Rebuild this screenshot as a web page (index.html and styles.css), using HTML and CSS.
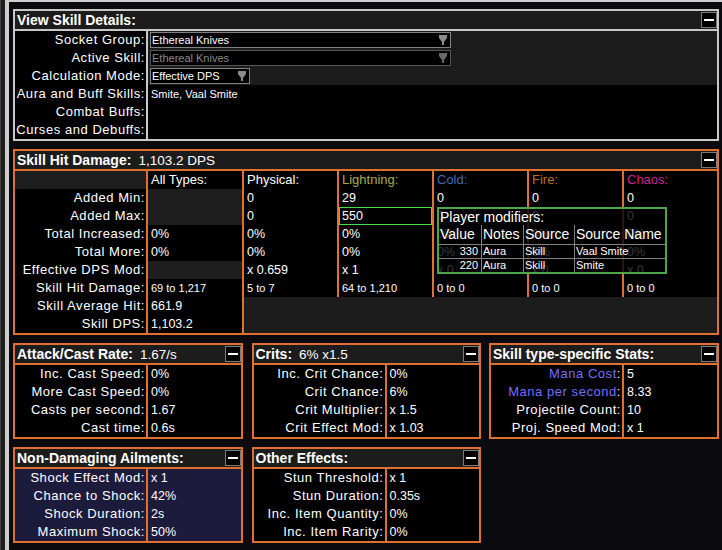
FILE: index.html
```html
<!DOCTYPE html>
<html lang="en">
<head>
  <meta charset="UTF-8">
  <title>Calcs - Skill Details</title>
  <link rel="stylesheet" href="styles.css">
</head>
<body>
  <div class="app">
    <div class="edge"></div>
    <div class="main">

      <!-- View Skill Details -->
      <section class="panel panel-gray">
        <div class="panel-head">
          <span class="title">View Skill Details:</span>
          <button class="collapse" type="button"></button>
        </div>
        <div class="kv">
          <div class="lbl">Socket Group:</div>
          <div class="ctl">
            <div class="select wide">
              <span>Ethereal Knives</span>
              <svg class="arrow" width="8" height="10" viewBox="0 0 8 10"><path d="M0 0H8V3L5 7V10H3V7L0 3Z" fill="#8c8c8c"/></svg>
            </div>
          </div>
          <div class="lbl">Active Skill:</div>
          <div class="ctl">
            <div class="select wide disabled">
              <span>Ethereal Knives</span>
              <svg class="arrow" width="8" height="10" viewBox="0 0 8 10"><path d="M0 0H8V3L5 7V10H3V7L0 3Z" fill="#6a6a6a"/></svg>
            </div>
          </div>
          <div class="lbl">Calculation Mode:</div>
          <div class="ctl">
            <div class="select narrow">
              <span>Effective DPS</span>
              <svg class="arrow" width="8" height="10" viewBox="0 0 8 10"><path d="M0 0H8V3L5 7V10H3V7L0 3Z" fill="#8c8c8c"/></svg>
            </div>
          </div>
          <div class="lbl">Aura and Buff Skills:</div>
          <div class="val small">Smite, Vaal Smite</div>
          <div class="lbl">Combat Buffs:</div>
          <div class="val"></div>
          <div class="lbl">Curses and Debuffs:</div>
          <div class="val"></div>
        </div>
      </section>

      <!-- Skill Hit Damage -->
      <section class="panel panel-orange">
        <div class="panel-head">
          <span class="title">Skill Hit Damage:</span>
          <span class="head-value">1,103.2 DPS</span>
          <button class="collapse" type="button"></button>
        </div>
        <div class="dmg">
          <div class="dim"></div>
          <div class="colhead">All Types:</div>
          <div class="colhead">Physical:</div>
          <div class="colhead lightning">Lightning:</div>
          <div class="colhead cold">Cold:</div>
          <div class="colhead fire">Fire:</div>
          <div class="colhead chaos">Chaos:</div>

          <div class="lbl">Added Min:</div>
          <div class="dim"></div>
          <div class="val">0</div>
          <div class="val">29</div>
          <div class="val">0</div>
          <div class="val">0</div>
          <div class="val">0</div>

          <div class="lbl">Added Max:</div>
          <div class="dim"></div>
          <div class="val">0</div>
          <div class="val hl">550</div>
          <div class="val">0</div>
          <div class="val">0</div>
          <div class="val">0</div>

          <div class="lbl">Total Increased:</div>
          <div class="val">0%</div>
          <div class="val">0%</div>
          <div class="val">0%</div>
          <div class="val">0%</div>
          <div class="val">0%</div>
          <div class="val">0%</div>

          <div class="lbl">Total More:</div>
          <div class="val">0%</div>
          <div class="val">0%</div>
          <div class="val">0%</div>
          <div class="val">0%</div>
          <div class="val">0%</div>
          <div class="val">0%</div>

          <div class="lbl">Effective DPS Mod:</div>
          <div class="dim"></div>
          <div class="val">x 0.659</div>
          <div class="val">x 1</div>
          <div class="val">x 0</div>
          <div class="val">x 0</div>
          <div class="val">x 0</div>

          <div class="lbl">Skill Hit Damage:</div>
          <div class="val small">69 to 1,217</div>
          <div class="val small">5 to 7</div>
          <div class="val small">64 to 1,210</div>
          <div class="val small">0 to 0</div>
          <div class="val small">0 to 0</div>
          <div class="val small">0 to 0</div>

          <div class="lbl">Skill Average Hit:</div>
          <div class="val">661.9</div>
          <div class="rest"></div>

          <div class="lbl">Skill DPS:</div>
          <div class="val">1,103.2</div>
        </div>

        <!-- hover tooltip over the Added Max cell -->
        <div class="tip">
          <div class="tip-title">Player modifiers:</div>
          <div class="mods">
            <div class="mh">Value</div>
            <div class="mh bl">Notes</div>
            <div class="mh bl">Source</div>
            <div class="mh bl">Source Name</div>

            <div class="num">330</div>
            <div class="bl">Aura</div>
            <div class="bl">Skill</div>
            <div class="bl">Vaal Smite</div>

            <div class="num">220</div>
            <div class="bl">Aura</div>
            <div class="bl">Skill</div>
            <div class="bl">Smite</div>
          </div>
        </div>
      </section>

      <div class="lower">
        <section class="panel panel-orange">
          <div class="panel-head">
            <span class="title">Attack/Cast Rate:</span>
            <span class="head-value">1.67/s</span>
            <button class="collapse" type="button"></button>
          </div>
          <div class="kv">
            <div class="lbl">Inc. Cast Speed:</div><div class="val">0%</div>
            <div class="lbl">More Cast Speed:</div><div class="val">0%</div>
            <div class="lbl">Casts per second:</div><div class="val">1.67</div>
            <div class="lbl">Cast time:</div><div class="val">0.6s</div>
          </div>
        </section>

        <section class="panel panel-orange">
          <div class="panel-head">
            <span class="title">Crits:</span>
            <span class="head-value">6% x1.5</span>
            <button class="collapse" type="button"></button>
          </div>
          <div class="kv">
            <div class="lbl">Inc. Crit Chance:</div><div class="val">0%</div>
            <div class="lbl">Crit Chance:</div><div class="val">6%</div>
            <div class="lbl">Crit Multiplier:</div><div class="val">x 1.5</div>
            <div class="lbl">Crit Effect Mod:</div><div class="val">x 1.03</div>
          </div>
        </section>

        <section class="panel panel-orange">
          <div class="panel-head">
            <span class="title">Skill type-specific Stats:</span>
            <button class="collapse" type="button"></button>
          </div>
          <div class="kv">
            <div class="lbl"><span class="mana">Mana Cost</span>:</div><div class="val">5</div>
            <div class="lbl"><span class="mana">Mana per second</span>:</div><div class="val">8.33</div>
            <div class="lbl">Projectile Count:</div><div class="val">10</div>
            <div class="lbl">Proj. Speed Mod:</div><div class="val">x 1</div>
          </div>
        </section>

        <section class="panel panel-orange navy">
          <div class="panel-head">
            <span class="title">Non-Damaging Ailments:</span>
            <button class="collapse" type="button"></button>
          </div>
          <div class="kv">
            <div class="lbl">Shock Effect Mod:</div><div class="val">x 1</div>
            <div class="lbl">Chance to Shock:</div><div class="val">42%</div>
            <div class="lbl">Shock Duration:</div><div class="val">2s</div>
            <div class="lbl">Maximum Shock:</div><div class="val">50%</div>
          </div>
        </section>

        <section class="panel panel-orange">
          <div class="panel-head">
            <span class="title">Other Effects:</span>
            <button class="collapse" type="button"></button>
          </div>
          <div class="kv">
            <div class="lbl">Stun Threshold:</div><div class="val">x 1</div>
            <div class="lbl">Stun Duration:</div><div class="val">0.35s</div>
            <div class="lbl">Inc. Item Quantity:</div><div class="val">0%</div>
            <div class="lbl">Inc. Item Rarity:</div><div class="val">0%</div>
          </div>
        </section>
      </div>

    </div>
  </div>
</body>
</html>
```

FILE: styles.css
```css
/* Reset */
body, section, button { margin: 0; padding: 0; box-sizing: border-box; }

body {
  width: 722px;
  height: 550px;
  overflow: hidden;
  background: #0a0a0f;
  color: #ffffff;
  font-family: 'Liberation Sans', Arial, sans-serif;
}

.app {
  display: flex;
  height: 550px;
}

/* sliver of the neighbouring panel on the left */
.edge {
  flex: none;
  width: 9px;
  background: linear-gradient(to right, #444 0 1px, #1c1c1c 1px 5px, #cdcdcd 5px 9px);
}

.main {
  flex: 1;
  border-top: 2px solid #cfcfcf;
  padding: 7px 3px 0 4px;
  display: flex;
  flex-direction: column;
  gap: 8px;
}

/* Panels */
.panel {
  position: relative;
  border: 2px solid var(--bc);
}

.panel-gray { --bc: #c8c8c8; }
.panel-orange { --bc: #e07030; }

.panel-head {
  height: 20px;
  background: #1c1c1c;
  border-bottom: 2px solid var(--bc);
  display: flex;
  align-items: center;
  padding-left: 2px;
  white-space: nowrap;
  box-sizing: border-box;
}

.title {
  font-weight: bold;
  font-size: 14px;
}

.head-value {
  font-size: 13.5px;
  margin-left: 7px;
}

.collapse {
  margin-left: auto;
  width: 16px;
  height: 16px;
  border: 1px solid #7a7a7a;
  background: #000;
  display: flex;
  align-items: center;
  justify-content: center;
}

.collapse::after {
  content: "";
  width: 10px;
  height: 2px;
  background: #fff;
}

/* label / value grids */
.kv {
  display: grid;
  grid-template-columns: 131px 1fr;
  column-gap: 2px;
  background: var(--bc);
}

.kv > div,
.dmg > div {
  height: 18px;
  line-height: 18px;
  background: #000;
  white-space: nowrap;
  overflow: hidden;
}

.navy .kv > div { background: #1c1b3c; }

.lbl {
  text-align: right;
  font-size: 13px;
  letter-spacing: 0.55px;
  padding-right: 1px;
}

.val {
  font-size: 12.5px;
  padding-left: 3px;
}

.val.small { font-size: 11px; }

.mana { color: #7070ff; }

/* dropdowns */
.kv > .ctl { background: #1c1c1c; }

.select {
  display: flex;
  align-items: center;
  height: 16px;
  margin: 1px 0 0 2px;
  padding-left: 1px;
  border: 1px solid #808080;
  background: #000;
  font-size: 11px;
  line-height: 14px;
  box-sizing: border-box;
}

.select.wide { width: 301px; }
.select.narrow { width: 100px; }

.select.disabled {
  border-color: #555;
  color: #8a8a8a;
}

.arrow {
  margin-left: auto;
  margin-right: 3px;
}

/* damage table */
.dmg {
  display: grid;
  grid-template-columns: 131px 94px 93px 93px 93px 93px 1fr;
  column-gap: 2px;
  background: #e07030;
}

.dmg > .dim { background: #1e1e1e; }

.dmg > .rest {
  grid-column: 3 / -1;
  grid-row: 8 / 10;
  height: auto;
  background: #1c1c1c;
}

.colhead {
  font-size: 13px;
  padding-left: 3px;
}

.lightning { color: #adaa47; }
.cold { color: #3f6db3; }
.fire { color: #b97123; }
.chaos { color: #d02090; }

.hl { box-shadow: inset 0 0 0 1px #40e040; }

/* tooltip */
.tip {
  position: absolute;
  left: 422px;
  top: 56px;
  width: 230px;
  height: 67px;
  box-sizing: border-box;
  border: 2px solid #4ca64c;
  background: rgba(0, 0, 0, 0.8);
}

.tip-title {
  height: 16px;
  line-height: 16px;
  font-size: 14px;
  padding-left: 1px;
}

.mods {
  display: grid;
  grid-template-columns: 42px 42px 51px 1fr;
}

.mods > div {
  height: 14px;
  line-height: 13px;
  font-size: 11px;
  padding-left: 1px;
  border-top: 1px solid #808080;
  box-sizing: border-box;
  white-space: nowrap;
}

.mods > .mh {
  height: 19px;
  line-height: 19px;
  font-size: 14px;
  border-top: none;
}

.mods > .bl { border-left: 1px solid #808080; }

.mods > .num {
  text-align: right;
  padding-right: 3px;
}

/* bottom grid of small panels */
.lower {
  display: grid;
  grid-template-columns: 230px 229px 230px;
  justify-content: space-between;
  row-gap: 8px;
}
```
